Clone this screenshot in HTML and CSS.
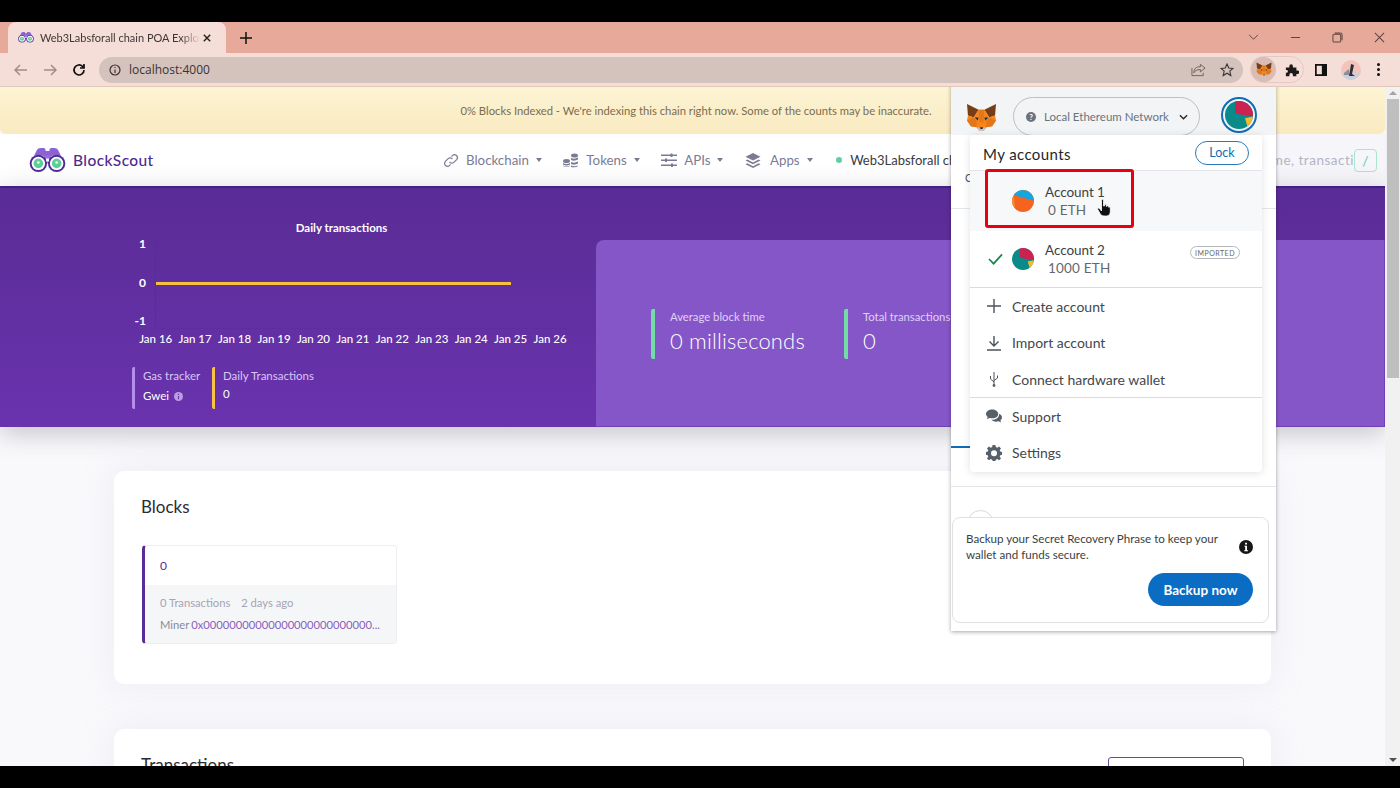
FILE: index.html
```html
<!DOCTYPE html>
<html lang="en">
<head>
<meta charset="utf-8">
<title>Web3Labsforall chain POA Explorer</title>
<link rel="stylesheet" href="styles.css">
</head>
<body>
<svg class="defs" width="0" height="0" aria-hidden="true">
  <defs>
    <symbol id="fox" viewBox="0 0 32 30">
      <polygon fill="#763d16" points="1,1 13,7 8,15 2,13"/>
      <polygon fill="#763d16" points="31,1 19,7 24,15 30,13"/>
      <polygon fill="#f6851b" points="13,7 19,7 24,15 30,13 31,18 27,24 21,25 20,27 12,27 11,25 5,24 1,18 2,13 8,15"/>
      <polygon fill="#e2761b" points="5,24 1,18 8,15 11,19 11,25"/>
      <polygon fill="#e2761b" points="27,24 31,18 24,15 21,19 21,25"/>
      <polygon fill="#233447" points="9,15 13,15 12,18"/>
      <polygon fill="#233447" points="23,15 19,15 20,18"/>
      <polygon fill="#e4761b" points="13,7 19,7 18,20 14,20"/>
      <polygon fill="#d7c1b3" points="12,25 20,25 19,29 13,29"/>
      <polygon fill="#233447" points="14,25 18,25 17,27 15,27"/>
    </symbol>
    <symbol id="binoc" viewBox="0 0 38 26">
      <path fill="#8d63d2" d="M5 8 L8 2 Q9 0 12 0 L15 0 Q17 0 17 3 L21 3 Q21 0 23 0 L26 0 Q29 0 30 2 L33 8 L24 8 L21 9 L17 9 L14 8Z"/>
      <rect x="15" y="8" width="8" height="8" fill="#9a72dc"/>
      <circle cx="9.5" cy="16" r="9" fill="#4f2a9c"/>
      <circle cx="28.500" cy="16" r="9" fill="#4f2a9c"/>
      <circle cx="9.500" cy="16" r="7" fill="#fff"/>
      <circle cx="28.500" cy="16" r="7" fill="#fff"/>
      <circle cx="9.500" cy="16" r="5" fill="#5fcf99"/>
      <circle cx="28.500" cy="16" r="5" fill="#5fcf99"/>
      <circle cx="9.500" cy="15" r="1.300" fill="#fff"/>
      <circle cx="28.500" cy="15" r="1.300" fill="#fff"/>
      <rect x="17.500" y="11" width="3" height="3" fill="#fff"/>
    </symbol>
    <symbol id="jazz2" viewBox="0 0 32 32">
      <circle cx="16" cy="16" r="16" fill="#0b8a8a"/>
      <path fill="#cc2251" d="M11.400 .7 A16 16 0 0 1 32 16 L31.800 17.800 L11.400 14.200Z"/>
      <path fill="#f4b92c" d="M31.800 17.800 L22.800 19.600 L25.600 28.800 A16 16 0 0 0 31.800 17.800Z"/>
    </symbol>
    <symbol id="jazz1" viewBox="0 0 32 32">
      <circle cx="16" cy="16" r="16" fill="#f6631e"/>
      <path fill="#14a6dc" d="M2.500 7.500 A16 16 0 0 1 32 15.500 Z"/>
      <path fill="#f0902e" d="M2.500 7.500 L4.500 27 A16 16 0 0 1 2.500 7.500Z"/>
    </symbol>
  </defs>
</svg>
<div class="screen">
  <div class="tabstrip">
    <div class="tab">
      <svg class="tab-fav"><use href="#binoc"/></svg>
      <span class="tab-title">Web3Labsforall chain POA Explorer</span>
      <svg class="tab-close" viewBox="0 0 10 10"><path d="M1 1 9 9M9 1 1 9"/></svg>
    </div>
    <svg class="newtab" viewBox="0 0 12 12"><path d="M6 0V12M0 6H12"/></svg>
    <div class="winctl">
      <svg class="wc wc-chev" viewBox="0 0 12 8"><path d="M1 1 6 6 11 1"/></svg>
      <svg class="wc wc-min" viewBox="0 0 12 12"><path d="M1 6H11"/></svg>
      <svg class="wc wc-max" viewBox="0 0 12 12"><path d="M3 1H9Q11 1 11 3V9M1 4Q1 2.500 2.500 2.500H8Q9.500 2.500 9.500 4V9.500Q9.500 11 8 11H2.500Q1 11 1 9.500Z"/></svg>
      <svg class="wc wc-x" viewBox="0 0 12 12"><path d="M1 1 11 11M11 1 1 11"/></svg>
    </div>
  </div>
  <div class="toolbar">
    <svg class="nav-ic dim" viewBox="0 0 14 12"><path d="M13 6H1M6 1 1 6 6 11"/></svg>
    <svg class="nav-ic dim" viewBox="0 0 14 12"><path d="M1 6H13M8 1 13 6 8 11"/></svg>
    <svg class="nav-ic reload" viewBox="0 0 14 14"><path d="M12 7A5 5 0 1 1 10.500 3.400L12 5M12 1V5H8"/></svg>
    <div class="omnibox">
      <svg class="info-ic" viewBox="0 0 12 12"><circle cx="6" cy="6" r="5"/><path d="M6 5.500V9M6 3V4"/></svg>
      <span class="url">localhost:4000</span>
      <svg class="omni-ic share" viewBox="0 0 16 14"><path d="M10 1 15 5 10 9V6.500C6 6.500 4 8 3 10 3 6 5 3.500 10 3.500ZM1 5V13H13V10"/></svg>
      <svg class="omni-ic star" viewBox="0 0 14 14"><path d="M7 1 8.800 5 13 5.400 9.800 8.200 10.800 12.500 7 10.200 3.200 12.500 4.200 8.200 1 5.400 5.200 5Z"/></svg>
    </div>
    <div class="ext-group">
      <span class="ext-fox"><svg class="ext-fox-ic"><use href="#fox"/></svg></span>
      <svg class="ext-puzzle" viewBox="0 0 16 16"><path d="M1 5H5V3.500A2 2 0 0 1 9 3.500V5H13V8.500H14.500A2 2 0 0 1 14.500 12.500H13V15H9V13.500A2 2 0 0 0 5 13.500V15H1V11H2.500A2 2 0 0 0 2.500 8H1Z"/></svg>
    </div>
    <svg class="panel-ic" viewBox="0 0 14 14"><path d="M0 0H14V14H0ZM2 2V12H8V2Z" fill-rule="evenodd"/></svg>
    <svg class="profile" viewBox="0 0 20 20"><defs><clipPath id="pc"><circle cx="10" cy="10" r="10"/></clipPath></defs><g clip-path="url(#pc)"><rect width="20" height="20" fill="#f2c4bb"/><rect y="13" width="20" height="7" fill="#c9cfdd"/><path d="M10 4 13 5 11 14 14 16H8Z" fill="#30303a"/><path d="M3 13 8 9V15H3Z" fill="#8a8f9a"/></g></svg>
    <span class="dots"><i></i><i></i><i></i></span>
  </div>

  <div class="viewport">
    <div class="page">
      <div class="banner">0% Blocks Indexed - We're indexing this chain right now. Some of the counts may be inaccurate.</div>
      <nav class="navbar">
        <a class="brand"><svg class="brand-ic"><use href="#binoc"/></svg><span>BlockScout</span></a>
        <div class="navlinks">
          <a class="navlink"><svg class="nl-ic" viewBox="0 0 16 16"><path class="stroke" d="M6.500 9.500A3 3 0 0 0 11 10L14 7A3 3 0 0 0 9.500 2.800L8.500 3.800M9.500 6.500A3 3 0 0 0 5 6L2 9A3 3 0 0 0 6.500 13.200L7.500 12.200"/></svg>Blockchain<i class="caret"></i></a>
          <a class="navlink"><svg class="nl-ic" viewBox="0 0 16 14"><path d="M8 2Q8 0 11.500 0T15 2 11.500 4 8 2ZM8 4.500Q11.500 6 15 4V6Q11.500 8 8 6.500ZM8 8.500Q11.500 10 15 8V10Q11.500 12 8 10.500ZM8 12Q11.500 13.500 15 12V12.500Q13 14.500 8 13.500ZM0 7.500Q0 5.500 3.500 5.500T7 7.500 3.500 9.500 0 7.500ZM0 9.500Q3.500 11.500 7 9.500V11Q3.500 13 0 11ZM0 12Q3.500 14 7 12V12.500Q3.500 14.500 0 12.500Z"/></svg>Tokens<i class="caret"></i></a>
          <a class="navlink"><svg class="nl-ic" viewBox="0 0 16 14"><path d="M0 1H16V2.500H0ZM0 6H16V7.500H0ZM0 11H16V12.500H0ZM9.500 0H11.500V3.500H9.500ZM4 5H6V8.500H4ZM10 10H12V13.500H10Z"/></svg>APIs<i class="caret"></i></a>
          <a class="navlink apps"><svg class="nl-ic" viewBox="0 0 16 16"><path d="M8 0 16 4 8 8 0 4ZM2 7 8 10 14 7 16 8 8 12 0 8ZM2 11 8 14 14 11 16 12 8 16 0 12Z"/></svg>Apps<i class="caret"></i></a>
          <a class="navlink net"><i class="dot"></i>Web3Labsforall chain</a>
        </div>
        <div class="search">
          <span class="search-text">Search by address, name, transacti</span>
          <span class="slash">/</span>
        </div>
      </nav>
      <section class="hero">
        <div class="chart">
          <div class="chart-title">Daily transactions</div>
          <div class="plot-row">
            <div class="ylabels"><span>1</span><span>0</span><span>-1</span></div>
            <div class="plot"><div class="plotline"></div></div>
          </div>
          <div class="xlabels">
            <span>Jan 16</span><span>Jan 17</span><span>Jan 18</span><span>Jan 19</span><span>Jan 20</span><span>Jan 21</span><span>Jan 22</span><span>Jan 23</span><span>Jan 24</span><span>Jan 25</span><span>Jan 26</span>
          </div>
          <div class="legend">
            <div class="leg leg-gas">
              <div class="leg-name">Gas tracker</div>
              <div class="leg-val">Gwei <svg class="gwei-i" viewBox="0 0 10 10"><circle cx="5" cy="5" r="5"/><path class="gwei-mark" d="M5 4.500V8M5 2V3.200"/></svg></div>
            </div>
            <div class="leg leg-daily">
              <div class="leg-name">Daily Transactions</div>
              <div class="leg-val">0</div>
            </div>
          </div>
        </div>
        <div class="stats">
          <div class="stat stat-a">
            <div class="stat-label">Average block time</div>
            <div class="stat-value">0 milliseconds</div>
          </div>
          <div class="stat">
            <div class="stat-label">Total transactions</div>
            <div class="stat-value">0</div>
          </div>
        </div>
      </section>
      <main class="main">
        <section class="card card-blocks">
          <h2 class="card-title">Blocks</h2>
          <div class="tile">
            <div class="tile-top">0</div>
            <div class="tile-bottom">
              <div class="tile-line"><span>0 Transactions</span><span>2 days ago</span></div>
              <div class="tile-line miner">Miner <a>0x00000000000000000000000000...</a></div>
            </div>
          </div>
        </section>
        <section class="card card-tx">
          <h2 class="card-title">Transactions</h2>
          <div class="tx-btn"></div>
        </section>
      </main>
    </div>
    <div class="scrollbar">
      <i class="sb-up"></i>
      <div class="sb-thumb"></div>
      <i class="sb-down"></i>
    </div>

    <div class="mm">
      <header class="mm-head">
        <svg class="mm-fox"><use href="#fox"/></svg>
        <div class="mm-net">
          <span class="mm-q">?</span>
          <span class="mm-net-name">Local Ethereum Network</span>
          <svg class="mm-chev" viewBox="0 0 10 6"><path d="M1 1 5 5 9 1"/></svg>
        </div>
        <span class="mm-avatar"><svg class="mm-avatar-ic"><use href="#jazz2"/></svg></span>
      </header>
      <div class="mm-under">
        <div class="mm-u1">C</div>
        <div class="mm-u2"></div>
        <div class="mm-u3"><i></i></div>
        <div class="mm-u4"><i></i></div>
      </div>

      <div class="menu">
        <div class="menu-head">
          <span class="menu-title">My accounts</span>
          <span class="lock">Lock</span>
        </div>
        <div class="acct acct-hover">
          <span class="check-slot"></span>
          <svg class="acct-ic"><use href="#jazz1"/></svg>
          <div class="acct-text"><div class="acct-name">Account 1</div><div class="acct-bal">0 ETH</div></div>
        </div>
        <div class="acct acct-last">
          <span class="check-slot"><svg class="check" viewBox="0 0 16 12"><path d="M1 6 6 11 15 1"/></svg></span>
          <svg class="acct-ic"><use href="#jazz2"/></svg>
          <div class="acct-text"><div class="acct-name">Account 2</div><div class="acct-bal">1000 ETH</div></div>
          <span class="imported">IMPORTED</span>
        </div>
        <div class="menu-group group-a">
          <div class="mi"><svg class="mi-ic" viewBox="0 0 16 16"><path class="ms" d="M8 1V15M1 8H15"/></svg>Create account</div>
          <div class="mi"><svg class="mi-ic" viewBox="0 0 16 16"><path class="ms" d="M8 1V11M3.500 6.500 8 11 12.500 6.500M1 15H15"/></svg>Import account</div>
          <div class="mi"><svg class="mi-ic" viewBox="0 0 16 16"><path class="ms thin" d="M8 1V15M8 11 4.500 8V5M8 9.500 11.500 7V4.500"/><circle class="mf" cx="8" cy="14.500" r="1.400"/></svg>Connect hardware wallet</div>
        </div>
        <div class="menu-group">
          <div class="mi"><svg class="mi-ic" viewBox="0 0 17 14"><path class="mf" d="M6.500 0C10 0 13 2 13 4.800S10 9.500 6.500 9.500C5.500 9.500 4.500 9.300 3.500 9L1 10.500 1.800 8C.7 7 0 6 0 4.800 0 2 3 0 6.500 0Z"/><path class="mf" d="M14 4.500C15.800 5.300 17 6.800 17 8.500 17 9.700 16.300 10.800 15.300 11.500L16 14 13.300 12.500C12.500 12.800 11.500 13 10.500 13 8.500 13 6.700 12.200 5.800 11 10.500 11 14.300 8.500 14 4.500Z"/></svg>Support</div>
          <div class="mi"><svg class="mi-ic" viewBox="0 0 16 16"><path class="mf" fill-rule="evenodd" d="M6.600 0H9.400L9.800 2.100 11.300 2.700 13.100 1.500 15 3.400 13.700 5.200 14.300 6.600 16 7V9.800L14.300 10.200 13.700 11.600 15 13.400 13 15.300 11.300 14.100 9.800 14.700 9.400 16H6.600L6.200 14.700 4.700 14.100 3 15.300 1 13.400 2.300 11.600 1.700 10.200 0 9.800V7L1.700 6.600 2.300 5.200 1 3.400 2.900 1.500 4.700 2.700 6.200 2.100ZM8 5.300A3 3 0 1 0 8 11.300 3 3 0 1 0 8 5.300Z"/></svg>Settings</div>
        </div>
        <div class="redbox"></div>
        <svg class="hand" viewBox="0 0 14 18"><path d="M4.500 1.500C4.500 .3 6.500 .3 6.500 1.500V7L7.500 7V6C7.500 5 9.300 5 9.300 6V7.300L10 7.300C10 6.500 11.700 6.500 11.700 7.500V8.300C11.800 7.700 13.300 7.800 13.300 8.800V12.500C13.300 15 12 17 9.500 17H7C5 17 4 16 3 14.500L.8 10.500C.2 9.400 1.700 8.500 2.500 9.500L4.500 12Z" fill="#111" stroke="#fff" stroke-width=".8"/></svg>
      </div>

      <div class="backup">
        <div class="backup-row">
          <p class="backup-text">Backup your Secret Recovery Phrase to keep your wallet and funds secure.</p>
          <svg class="backup-i" viewBox="0 0 14 14"><circle cx="7" cy="7" r="7" fill="#141618"/><path d="M5.500 5.700H8V10.200H9V11.300H5.200V10.200H6.200V6.800H5.500ZM6.100 2.700H8V4.600H6.100Z" fill="#fff"/></svg>
        </div>
        <div class="backup-actions"><span class="backup-btn">Backup now</span></div>
      </div>
    </div>
  </div>
</div>
</body>
</html>
```
FILE: styles.css
```css
* { box-sizing: border-box; }
html, body { margin: 0; padding: 0; height: 100%; background: #000; overflow: hidden; }
body { font-family: "Lato", "Noto Sans", sans-serif; }
.defs { position: absolute; }
a { color: inherit; text-decoration: none; }
i { font-style: normal; }
svg { display: block; flex: none; }

.screen { width: 1400px; height: 788px; padding: 22px 0; display: flex; flex-direction: column; background: #000; }

/* Chrome */
.tabstrip { height: 31px; flex: none; background: #e7a99a; display: flex; align-items: stretch; padding-left: 8px; }
.tab { width: 218px; background: #f6ded8; border-radius: 8px 8px 0 0; display: flex; align-items: center; padding: 0 15px 0 10px; font: 11px "Lato", sans-serif; color: #3d3633; }
.tab-fav { width: 16px; height: 11px; margin-right: 6px; }
.tab-title { flex: 1; overflow: hidden; white-space: nowrap; margin-right: 3px; -webkit-mask-image: linear-gradient(90deg, #000 88%, transparent); mask-image: linear-gradient(90deg, #000 88%, transparent); }
.tab-close { width: 8px; height: 8px; }
.tab-close path { stroke: #222; stroke-width: 1.800; fill: none; }
.newtab { width: 12px; height: 12px; margin: 10px 0 0 14px; }
.newtab path { stroke: #111; stroke-width: 1.500; fill: none; }
.winctl { margin-left: auto; display: flex; align-items: center; padding-right: 15px; gap: 31px; }
.wc { width: 11px; height: 11px; fill: none; stroke: #5d4641; stroke-width: 1.100; }
.wc-chev { height: 7px; }

.toolbar { height: 34px; flex: none; background: #f6ded8; border-bottom: 1px solid #e2c7bb; display: flex; align-items: center; padding: 0 0 0 14px; }
.nav-ic { width: 14px; height: 12px; margin-right: 15px; fill: none; stroke-width: 1.500; stroke: #111; }
.nav-ic.dim { stroke: #a08c87; }
.nav-ic.reload { width: 14px; height: 14px; margin-right: 13px; stroke-width: 1.700; }
.omnibox { width: 1144px; height: 26px; border-radius: 13px; background: #d4c3bd; display: flex; align-items: center; padding: 0 9px 0 10px; }
.info-ic { width: 12px; height: 12px; fill: none; stroke: #3c3331; stroke-width: 1.200; margin-right: 8px; }
.url { font: 12px "Open Sans", sans-serif; color: #3b3230; flex: 1; }
.omni-ic { fill: none; stroke: #6c5f5b; stroke-width: 1; }
.share { width: 15px; height: 14px; margin-right: 14px; }
.star { width: 14px; height: 14px; stroke: #3a3230; stroke-width: 1.100; }
.ext-group { margin-left: 7px; height: 27px; width: 54px; border-radius: 14px; border: 1px solid #e3c9c1; display: flex; align-items: center; flex: none; }
.ext-fox { width: 25px; height: 25px; border-radius: 50%; background: #d9bdb4; display: flex; align-items: center; justify-content: center; }
.ext-fox-ic { width: 16px; height: 15px; }
.ext-puzzle { width: 14px; height: 14px; margin-left: 9px; fill: #1c1a1a; }
.panel-ic { width: 12px; height: 12px; margin-left: 11px; fill: #111; }
.profile { width: 20px; height: 20px; margin-left: 14px; }
.dots { display: flex; flex-direction: column; gap: 2px; margin-left: 16px; }
.dots i { width: 3px; height: 3px; border-radius: 50%; background: #111; }

/* Page */
.viewport { flex: 1; min-height: 0; position: relative; display: flex; overflow: hidden; background: #f9f9fc; }
.page { width: 1385px; flex: none; overflow: hidden; font-family: "Lato", "Noto Sans", sans-serif; }
.banner { height: 47px; background: linear-gradient(#fdf4d4, #f9eac0); border-radius: 0 0 6px 6px; display: flex; align-items: center; justify-content: center; padding-left: 7px; font-size: 11.250px; color: #7a6d4d; }
.navbar { height: 52px; background: #fff; display: flex; align-items: center; padding-left: 29px; white-space: nowrap; overflow: hidden; }
.brand { display: flex; align-items: center; font-size: 15.500px; color: #4f2a94; letter-spacing: .4px; font-weight: 500; width: 414px; flex: none; }
.brand-ic { width: 37px; height: 25px; margin-right: 7px; }
.navlinks { display: flex; align-items: center; font-size: 13.300px; color: #7b7b94; flex: none; width: 557px; overflow: hidden; }
.navlink { display: flex; align-items: center; margin-right: 21.500px; flex: none; }
.nl-ic { width: 16px; height: 15px; margin-right: 7px; fill: #7b7b94; }
.apps .nl-ic { margin-right: 9px; }
.nl-ic .stroke { fill: none; stroke: #7b7b94; stroke-width: 1.300; }
.caret { width: 0; height: 0; margin-left: 7px; border: 3px solid transparent; border-top: 4px solid #7b7b94; border-bottom: 0; }
.net { color: #3a3a3f; margin-left: 2px; font-size: 13px; }
.dot { width: 6px; height: 6px; border-radius: 50%; background: #5fd0a0; margin-right: 8px; }
.search { flex: 1; align-self: stretch; background: #f5f5fa; display: flex; align-items: center; justify-content: flex-end; padding-right: 8px; min-width: 0; overflow: hidden; }
.search-text { font-size: 13.500px; color: #b4b4c4; letter-spacing: .5px; flex: none; }
.slash { width: 23px; height: 23px; flex: none; border: 1px solid #a9e6c9; border-radius: 4px; color: #62cf9d; font-size: 14px; display: flex; align-items: center; justify-content: center; background: #f5f5fa; }

.hero { height: 241px; background: linear-gradient(#5a2c95, #6933ae); border-top: 2px solid #42208a; display: flex; align-items: flex-end; box-shadow: 0 6px 24px rgba(60,60,70,.28); position: relative; color: #fff; }
.chart { width: 596px; flex: none; align-self: stretch; padding: 32px 0 0 132px; }
.chart-title { font-size: 11.500px; font-weight: 700; text-align: center; margin-left: 50px; width: 319px; line-height: 16px; }
.plot-row { display: flex; margin-top: 1px; height: 93px; }
.ylabels { width: 14px; margin-right: 9px; display: flex; flex-direction: column; justify-content: space-between; align-items: flex-end; font-size: 12px; font-weight: 700; line-height: 14px; height: 91px; }
.plot { width: 412px; border-left: 1px solid rgba(70,30,130,.18); border-bottom: 1px solid rgba(70,30,130,.12); display: flex; align-items: center; height: 91px; margin-top: 1px; }
.plotline { width: 355px; height: 3px; background: #f8c03a; }
.xlabels { display: flex; margin: 1px 0 0 4px; font-size: 11.500px; font-weight: 500; line-height: 16px; }
.xlabels span { width: 39.450px; text-align: center; flex: none; white-space: nowrap; }
.legend { display: flex; margin-top: 20px; }
.leg { height: 42px; border-left: 3px solid #b58eea; border-radius: 2px; padding-left: 8px; font-size: 11.500px; }
.leg-gas { width: 80px; }
.leg-daily { border-left-color: #f8c244; }
.leg-name { color: #d9c6f5; line-height: 18px; }
.leg-val { color: #fff; display: flex; align-items: center; gap: 5px; margin-top: 3px; line-height: 16px; }
.leg-daily .leg-val { margin-top: 1px; }
.gwei-i { width: 9px; height: 9px; fill: #b99fe0; }
.gwei-mark { fill: none; stroke: #6a35ac; stroke-width: 1.200; }
.stats { flex: 1; height: 187px; background: #8556c8; border-radius: 8px 0 0 0; display: flex; align-items: center; padding: 2px 0 0 55px; border-right: 1px solid #6f3fb8; border-bottom: 1px solid #6f3fb8; }
.stat { height: 50px; border-left: 4px solid #72dba6; border-radius: 2px; padding-left: 15px; }
.stat-a { width: 193px; flex: none; }
.stat-label { font-size: 11.300px; color: #e0cff7; line-height: 16px; white-space: nowrap; }
.stat-value { font-size: 22px; font-weight: 300; line-height: 32px; letter-spacing: .15px; white-space: nowrap; }

.main { padding: 44px 114px 0; display: flex; flex-direction: column; gap: 45px; }
.card { background: #fff; border-radius: 10px; box-shadow: 0 0 30px rgba(210,210,225,.35); padding: 27px 27px 0; flex: none; }
.card-blocks { height: 213px; padding-left: 28px; }
.card-blocks .card-title { margin-left: -1px; }
.card-tx { height: 120px; display: flex; justify-content: space-between; padding-right: 27px; }
.card-title { margin: 0; font-size: 17px; font-weight: 400; color: #2c2c33; line-height: 18px; }
.tile { width: 255px; height: 99px; margin-top: 29px; border: 1px solid #eceef2; border-left: 3px solid #5b2c97; border-radius: 4px; overflow: hidden; }
.tile-top { height: 39px; padding-left: 15px; display: flex; align-items: center; font-size: 12px; color: #5b2c97; }
.tile-bottom { height: 59px; background: #f5f6f8; padding: 10px 0 0 15px; font-size: 11.200px; color: #a4a4b4; }
.tile-line { display: flex; gap: 11px; line-height: 16px; }
.miner { margin-top: 6px; gap: 2px; color: #8a8a98; white-space: nowrap; }
.miner a { color: #8a5fbb; }
.tx-btn { width: 136px; height: 40px; border: 1px solid #6a4a9c; border-radius: 3px; margin-top: 1px; }

.scrollbar { flex: 1; background: #f1f1f1; display: flex; flex-direction: column; align-items: center; }
.sb-up, .sb-down { width: 0; height: 0; border: 4px solid transparent; flex: none; }
.sb-up { border-bottom: 4px solid #a3a3a3; border-top: 0; margin-top: 4px; }
.sb-thumb { width: 12px; height: 279px; background: #bfbfbf; margin-top: 4px; }
.sb-down { border-top: 4px solid #505050; border-bottom: 0; margin-top: auto; margin-bottom: 4px; }

/* MetaMask popup */
.mm { position: absolute; left: 951px; top: -4px; width: 325px; height: 548px; background: #fff; box-shadow: 0 1px 4px rgba(0,0,0,.35); font-family: "Lato", "Noto Sans", sans-serif; color: #24272a; }
.mm-head { height: 52px; background: #f2f4f6; display: flex; align-items: flex-start; padding: 20px 0 0 15px; }
.mm-fox { width: 31px; height: 29px; }
.mm-net { width: 187px; height: 39px; margin: -6px 0 0 16px; border: 1px solid #bbc0c5; border-radius: 20px; display: flex; align-items: center; padding-left: 12px; font-size: 11.500px; color: #6a737d; white-space: nowrap; background: #f2f4f6; }
.mm-q { width: 10px; height: 10px; border-radius: 50%; background: #6a737d; color: #fff; font-size: 8px; font-weight: 700; display: flex; align-items: center; justify-content: center; margin-right: 8px; flex: none; }
.mm-net-name { flex: 1; }
.mm-chev { width: 9px; height: 6px; margin-right: 11px; fill: none; stroke: #24272a; stroke-width: 1.500; }
.mm-avatar { width: 36px; height: 36px; margin: -6px 0 0 21px; border: 2px solid #0f6cb5; border-radius: 50%; padding: 2px; flex: none; }
.mm-avatar-ic { width: 28px; height: 28px; }
.mm-under { display: flex; flex-direction: column; color: #555; }
.mm-u1 { height: 74px; border-bottom: 1px solid #e4e6e9; padding: 37px 0 0 14px; font-size: 11px; line-height: 12px; }
.mm-u2 { height: 239px; border-bottom: 2px solid #0f6cb5; width: 19px; }
.mm-u3 { height: 39px; border-bottom: 1px solid #e4e6e9; padding-top: 21px; padding-left: 122px; }
.mm-u3 i { display: block; width: 10px; height: 2px; background: #0f6cb5; }
.mm-u4 { padding: 23px 0 0 16px; }
.mm-u4 i { display: block; width: 27px; height: 27px; border: 1px solid #d6d9dc; border-radius: 50%; }

.menu { position: absolute; left: 19px; top: 52px; width: 292px; height: 337px; background: #fff; border-radius: 4px; box-shadow: 0 1px 8px rgba(0,0,0,.12); font-size: 14px; color: #3f444a; }
.menu-head { height: 36px; border-bottom: 1px solid #e3e5e8; display: flex; align-items: center; justify-content: space-between; padding: 0 13px; }
.menu-title { font-size: 15px; letter-spacing: .4px; color: #24272a; padding-top: 2px; }
.lock { width: 54px; height: 24px; border: 1px solid #2a7ab8; border-radius: 12px; display: flex; align-items: center; justify-content: center; font-size: 12.500px; color: #0f6cb5; }
.acct { height: 60px; display: flex; align-items: center; }
.acct-hover { background: #f7f8f9; }
.acct-last { height: 57px; border-bottom: 1px solid #d9dcdf; }
.check-slot { width: 42px; display: flex; justify-content: flex-end; padding-right: 9px; flex: none; }
.check { width: 15px; height: 12px; fill: none; stroke: #128a4a; stroke-width: 1.800; }
.acct-ic { width: 22px; height: 22px; margin-right: 11px; }
.acct-text { flex: 1; }
.acct-name { font-size: 13.500px; line-height: 18px; letter-spacing: -.05px; color: #3a3f44; }
.acct-bal { font-size: 13.500px; line-height: 18px; letter-spacing: .2px; color: #62686e; padding-left: 3px; }
.imported { width: 50px; height: 13px; border: 1px solid #b4b8bd; border-radius: 7px; font-size: 7px; letter-spacing: .5px; color: #666; display: flex; align-items: center; justify-content: center; margin-right: 22px; margin-bottom: 13px; }
.group-a { border-bottom: 1px solid #d9dcdf; height: 110px; }
.mi { height: 36.500px; display: flex; align-items: center; padding-left: 16px; font-size: 14px; color: #43484e; }
.mi-ic { width: 16px; height: 16px; margin-right: 10px; }
.ms { fill: none; stroke: #4b535b; stroke-width: 1.400; }
.ms.thin { stroke-width: 1; }
.mf { fill: #56606a; }
.redbox { position: absolute; left: 15px; top: 34px; width: 149px; height: 59px; border: 3px solid #e8000f; border-radius: 3px; }
.hand { position: absolute; left: 127px; top: 64px; width: 14px; height: 18px; }

.backup { position: absolute; left: 1px; top: 434px; width: 317px; height: 106px; background: #fff; border: 1px solid #dfe1e4; border-radius: 8px; padding: 13px 15px 0 13px; }
.backup-row { display: flex; align-items: center; justify-content: space-between; }
.backup-text { margin: 0; width: 266px; font-size: 11.600px; line-height: 16px; color: #3a3f44; }
.backup-i { width: 14px; height: 14px; }
.backup-actions { display: flex; justify-content: flex-end; margin-top: 10px; }
.backup-btn { width: 105px; height: 33px; border-radius: 17px; background: #0a6cc2; color: #fff; font-size: 13.500px; font-weight: 700; display: flex; align-items: center; justify-content: center; }
```
